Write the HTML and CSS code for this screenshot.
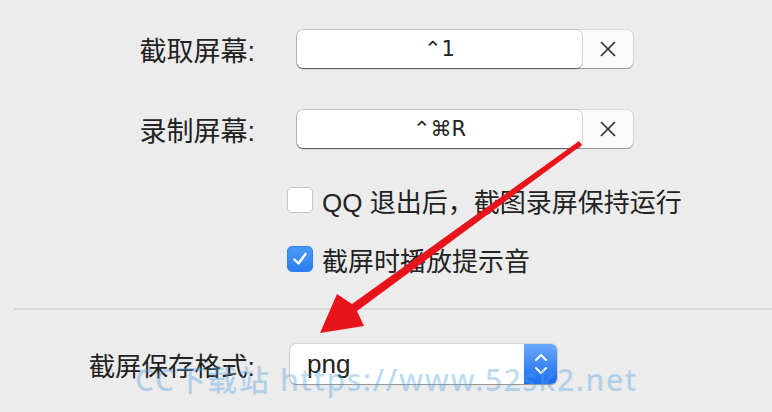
FILE: index.html
```html
<!DOCTYPE html>
<html>
<head>
    <title>截图设置</title>
    <link rel="stylesheet" href="styles.css">
</head>
<body>
    <div class="prefs">
        <div class="shortcuts">
            <div class="row">
                <span class="label">截取屏幕:</span>
                <div class="hotkey">
                    <div class="key">⌃1</div>
                    <button class="clear" type="button">
                        <svg width="16" height="16" viewBox="0 0 16 16"><path d="M1 1L15 15M15 1L1 15" stroke="#2b2b2b" stroke-width="1.6" fill="none"/></svg>
                    </button>
                </div>
            </div>

            <div class="row">
                <span class="label">录制屏幕:</span>
                <div class="hotkey">
                    <div class="key">⌃⌘R</div>
                    <button class="clear" type="button">
                        <svg width="16" height="16" viewBox="0 0 16 16"><path d="M1 1L15 15M15 1L1 15" stroke="#2b2b2b" stroke-width="1.6" fill="none"/></svg>
                    </button>
                </div>
            </div>

            <label class="check">
                <span class="box"></span>
                QQ 退出后，截图录屏保持运行
            </label>

            <label class="check">
                <span class="box on">
                    <svg width="18" height="18" viewBox="0 0 18 18"><path d="M3.5 9.5L7.5 13.5L14.5 4" stroke="#fff" stroke-width="2.4" fill="none" stroke-linecap="round" stroke-linejoin="round"/></svg>
                </span>
                截屏时播放提示音
            </label>
        </div>

        <div class="divider"></div>

        <div class="row format">
            <span class="label">截屏保存格式:</span>
            <div class="select">
                <span class="value">png</span>
                <span class="stepper">
                    <svg width="14" height="26" viewBox="0 0 14 26"><path d="M2 9L7 4L12 9M2 17L7 22L12 17" stroke="#fff" stroke-width="2" fill="none" stroke-linecap="round" stroke-linejoin="round"/></svg>
                </span>
            </div>
        </div>
    </div>

    <!-- annotation arrow drawn over the screenshot -->
    <svg class="arrow" width="772" height="412" viewBox="0 0 772 412">
        <polygon points="320,333 337,294 352,304 579,141 582,145 357,311 364,326" fill="#e8141b"/>
    </svg>

    <div class="watermark">CC下载站 https://www.52sk2.net</div>
</body>
</html>
```

FILE: styles.css
```css
body {
    margin: 0;
    height: 412px;
    overflow: hidden;
    background-color: #ececec;
    font-family: "Liberation Sans", "Noto Sans CJK SC", sans-serif;
    color: #222;
    position: relative;
}

.prefs {
    padding-top: 30px;
}

.shortcuts {
    display: flex;
    flex-direction: column;
}

.row {
    display: flex;
    align-items: center;
    height: 38px;
    margin-bottom: 42px;
}

.label {
    width: 255px;
    text-align: right;
    font-size: 27px;
    line-height: 38px;
    margin-right: 42px;
    margin-top: 6px;
}

.hotkey {
    display: flex;
    width: 336px;
    height: 38px;
    background-color: #fafafa;
    border-radius: 6px;
    box-shadow: 0 1px 1px rgba(0, 0, 0, 0.3), 0 0 0 1px rgba(0, 0, 0, 0.08);
}

.key {
    flex: 0 0 285px;
    background-color: #fff;
    border-radius: 6px;
    box-shadow: 0 1px 1px rgba(0, 0, 0, 0.35), 0 0 0 1px rgba(0, 0, 0, 0.1);
    text-align: center;
    font-family: "DejaVu Sans", sans-serif;
    font-size: 21px;
    line-height: 38px;
    color: #222;
}

.clear {
    flex: 1;
    border: none;
    background: none;
    padding: 0;
    display: flex;
    align-items: center;
    justify-content: center;
}

.check {
    display: flex;
    align-items: center;
    height: 26px;
    padding-left: 287px;
    font-size: 26px;
    margin-bottom: 33px;
}

.check:last-child {
    margin-bottom: 36px;
}

.box {
    width: 24px;
    height: 24px;
    margin-right: 9px;
    border: 1px solid #c4c4c4;
    border-radius: 5px;
    background-color: #fff;
    display: flex;
    align-items: center;
    justify-content: center;
}

.box.on {
    border-color: #2f7ff0;
    background: linear-gradient(#4c9af7, #2c7df0);
}

.shortcuts .row:nth-child(2) {
    margin-bottom: 39px;
}

.divider {
    margin-left: 14px;
    height: 2px;
    background-color: #d8d8d8;
}

.format {
    margin-top: 35px;
}

.format .label {
    margin-right: 35px;
    font-size: 26.5px;
}

.select {
    display: flex;
    width: 267px;
    height: 40px;
    background-color: #fff;
    border-radius: 6px;
    box-shadow: 0 1px 1px rgba(0, 0, 0, 0.3), 0 0 0 1px rgba(0, 0, 0, 0.1);
}

.value {
    flex: 1;
    padding-left: 17px;
    font-size: 26px;
    line-height: 40px;
    color: #222;
}

.stepper {
    width: 33px;
    border-radius: 0 6px 6px 0;
    background: linear-gradient(#68a9fa, #1b6cf0);
    display: flex;
    align-items: center;
    justify-content: center;
}

.arrow {
    position: absolute;
    top: 0;
    left: 0;
    pointer-events: none;
}

.watermark {
    position: absolute;
    left: 135px;
    top: 362px;
    font-family: "Noto Sans", "Noto Sans CJK SC", sans-serif;
    font-weight: 500;
    font-size: 30px;
    letter-spacing: 1.6px;
    line-height: 36px;
    color: rgba(80, 160, 225, 0.38);
    pointer-events: none;
    white-space: nowrap;
}
```
